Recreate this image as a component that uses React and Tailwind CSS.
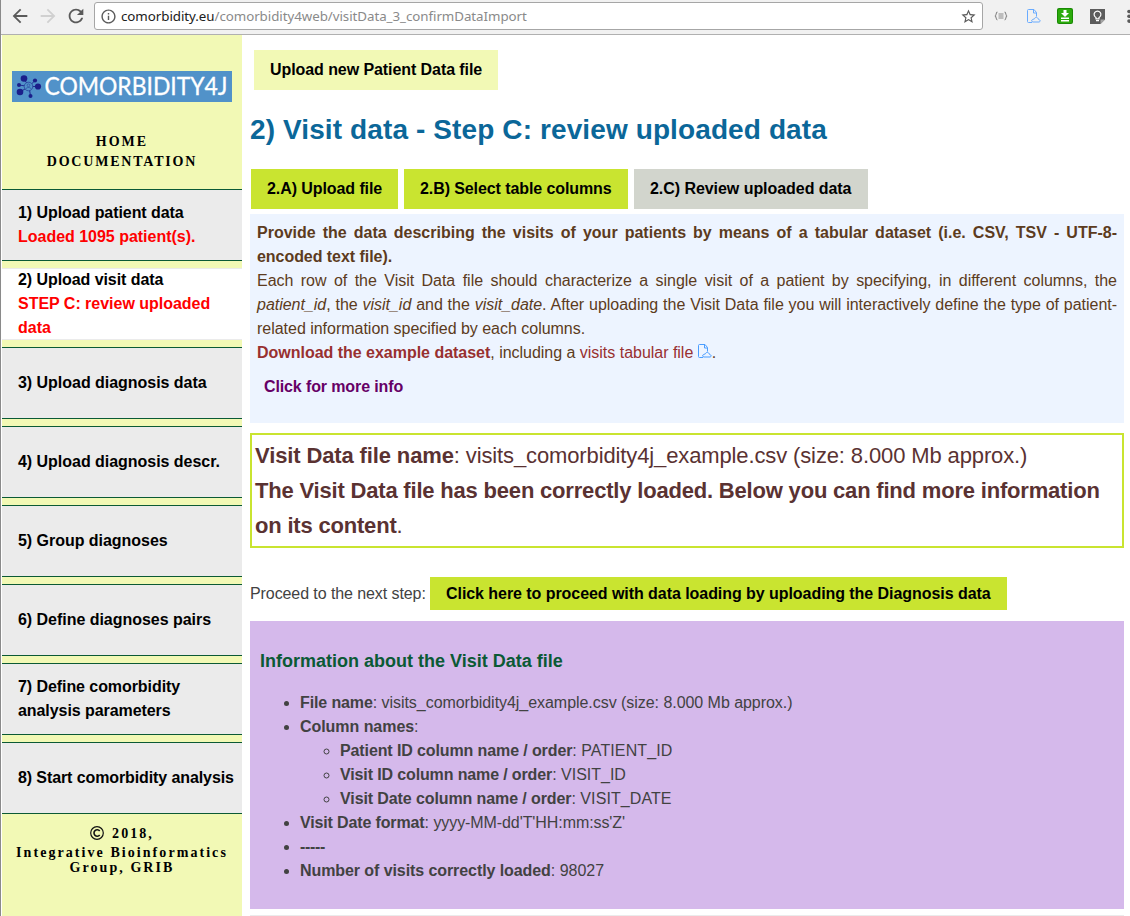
import React from "react";

const Btn = ({ className, children }) => (
  <a className={"flex items-center px-4 font-bold text-black whitespace-nowrap " + className}>{children}</a>
);

const FileCloud = ({ className, color = "#4a9dff" }) => (
  <svg viewBox="0 0 14 15" className={className} fill="none" stroke={color} strokeWidth="1">
    <path d="M5 13.500H1.500a1 1 0 0 1-1-1V1.500a1 1 0 0 1 1-1h5.500l2.500 3v4" />
    <path d="M6.500 .5V4h3" />
    <path d="M6 13a1.300 1.300 0 0 1-.5-2.500l2-.7c.5-2 3-2 3.500 0l1.500 1a1.200 1.200 0 0 1-.3 2.200z" />
  </svg>
);

const Toolbar = () => (
  <header className="flex h-[35px] items-start border-b border-[#b0b0b0] bg-[#f1f1f1]">
    <svg viewBox="0 0 24 24" className="ml-[8px] mt-[5px] h-[22px] w-[22px] shrink-0 fill-[#5a5a5a]">
      <path d="M20 11H7.830l5.590-5.590L12 4l-8 8 8 8 1.410-1.410L7.830 13H20v-2z" />
    </svg>
    <svg viewBox="0 0 24 24" className="ml-[6px] mt-[5px] h-[22px] w-[22px] shrink-0 fill-[#d0d0d0]">
      <path d="M4 13h12.170l-5.590 5.590L12 20l8-8-8-8-1.410 1.410L16.170 11H4v2z" />
    </svg>
    <svg viewBox="0 0 24 24" className="ml-[6px] mt-[5px] h-[22px] w-[22px] shrink-0 fill-[#5a5a5a]">
      <path d="M17.650 6.350C16.200 4.900 14.210 4 12 4c-4.420 0-7.990 3.580-7.990 8s3.570 8 7.990 8c3.730 0 6.840-2.550 7.730-6h-2.080c-.82 2.330-3.040 4-5.650 4-3.310 0-6-2.690-6-6s2.690-6 6-6c1.660 0 3.140.69 4.220 1.780L13 11h7V4l-2.350 2.350z" />
    </svg>
    <div className="ml-[7px] mt-[2px] flex h-7 w-[889px] shrink-0 items-center rounded-[3px] border border-[#a6a6a6] bg-white pl-[5px] pr-[5px]">
      <svg viewBox="0 0 24 24" className="h-[17px] w-[17px] shrink-0 fill-[#5a5a5a]">
        <path d="M11 17h2v-6h-2v6zm1-15C6.480 2 2 6.480 2 12s4.480 10 10 10 10-4.480 10-10S17.520 2 12 2zm0 18c-4.410 0-8-3.590-8-8s3.590-8 8-8 8 3.590 8 8-3.590 8-8 8zM11 9h2V7h-2v2z" />
      </svg>
      <span className="ml-[4px] whitespace-nowrap font-['Noto_Sans',sans-serif] text-[13.330px] leading-5 tracking-[-0.050px] text-[#8a8a8a]">
        <span className="text-[#202020]">comorbidity.eu</span>/comorbidity4web/visitData_3_confirmDataImport
      </span>
      <svg viewBox="0 0 24 24" className="ml-auto h-[17px] w-[17px] shrink-0 fill-[#5a5a5a]">
        <path d="M22 9.240l-7.190-.62L12 2 9.190 8.630 2 9.240l5.460 4.730L5.820 21 12 17.270 18.180 21l-1.630-7.030L22 9.240zM12 15.400l-3.760 2.270 1-4.280-3.320-2.880 4.380-.38L12 6.100l1.710 4.040 4.380.38-3.320 2.880 1 4.280L12 15.400z" />
      </svg>
    </div>
    <svg viewBox="0 0 14 10" className="ml-[11px] mt-[11px] h-[10px] w-[14px] shrink-0" fill="none" stroke="#8a8a8a" strokeWidth="1.200">
      <path d="M3.500 1C1.500 1 2.800 5 .8 5c2 0 .7 4 2.700 4M10.500 1c2 0 .7 4 2.700 4-2 0-.7 4-2.700 4M4.500 3h5M4.500 5h5M4.500 7h5" />
    </svg>
    <FileCloud className="ml-[19px] mt-[9px] h-[15px] w-[14px] shrink-0" color="#69abff" />
    <svg viewBox="0 0 16 16" className="ml-[16px] mt-[8px] h-4 w-4 shrink-0">
      <rect width="16" height="16" rx="2" fill="#198a04" />
      <rect x="1" y="1" width="14" height="14" rx="1.500" fill="#2cab0c" />
      <path d="M6.500 2h3v3H12L8 9 4 5h2.500zM4 9.500h8V11H4zM4 12h8v1.500H4z" fill="#fff" />
    </svg>
    <svg viewBox="0 0 15 15" className="ml-[17px] mt-[9px] h-[15px] w-[15px] shrink-0">
      <path d="M0 0h15v10.500L10.500 15H0z" fill="#5c5c5c" />
      <path d="M10.500 15v-4.500H15z" fill="#a5a5a5" />
      <path d="M6 9.800V8.500a3.400 3.400 0 1 1 3 0v1.300zM6 11.700h3" fill="none" stroke="#fff" strokeWidth="1.200" />
    </svg>
    <svg viewBox="0 0 4 14" className="ml-[22px] mt-[9px] h-[14px] w-1 shrink-0 fill-[#5a5a5a]">
      <circle cx="2" cy="2.500" r="1.800" /><circle cx="2" cy="7.300" r="1.800" /><circle cx="2" cy="12.100" r="1.800" />
    </svg>
  </header>
);

const Logo = () => (
  <svg viewBox="0 0 220 31" className="h-[31px] w-[220px] overflow-visible">
    <rect width="220" height="31" fill="#5192c9" />
    <g stroke="#1b1f8a" strokeWidth=".9">
      <path d="M12 8l5 7.500M23 9.500l-6 6M7 14l10 1.500M8 21l9-5.500M26 15.500h-9M18.500 25L17 15.500" />
    </g>
    <g fill="#1b1f8a">
      <circle cx="12" cy="7.500" r="3.300" /><circle cx="23" cy="9.500" r="2.100" /><circle cx="7" cy="14" r="2" />
      <circle cx="8" cy="21" r="3.300" /><circle cx="26" cy="15.500" r="3.100" /><circle cx="18.500" cy="25" r="2" />
    </g>
    <circle cx="16.500" cy="15.500" r="4.300" fill="#5192c9" stroke="#27409c" strokeWidth=".8" />
    <circle cx="16.500" cy="14.300" r="1.400" fill="none" stroke="#27409c" strokeWidth=".6" />
    <path d="M13.800 18c.5-2 4.900-2 5.400 0" fill="none" stroke="#27409c" strokeWidth=".6" />
    <text x="32.500" y="24" fill="#fff" stroke="#fff" strokeWidth=".3" fontFamily="Lato, sans-serif" fontSize="24.500" textLength="183" lengthAdjust="spacingAndGlyphs">COMORBIDITY4J</text>
  </svg>
);

const steps = [
  { t: "1) Upload patient data", s: "Loaded 1095 patient(s)." },
  { t: "2) Upload visit data", s: "STEP C: review uploaded data", active: true },
  { t: "3) Upload diagnosis data" },
  { t: "4) Upload diagnosis descr." },
  { t: "5) Group diagnoses" },
  { t: "6) Define diagnoses pairs" },
  { t: "7) Define comorbidity analysis parameters" },
  { t: "8) Start comorbidity analysis" },
];

const Sidebar = () => (
  <aside className="flex w-60 shrink-0 flex-col bg-[#f2f9b5]">
    <div className="flex justify-center pt-[36px]"><Logo /></div>
    <nav className="mt-[30px] flex h-[57px] flex-col text-center font-['Liberation_Serif',serif] text-[14px] font-bold leading-5 tracking-[2px] text-black">
      <a>HOME</a>
      <a className="tracking-[1.800px]">DOCUMENTATION</a>
    </nav>
    <div className="flex flex-col gap-[7px]">
      {steps.map((p, i) => (
        <div
          key={p.t}
          className={
            "flex h-[72px] flex-col justify-center border-y pl-4 pr-1 font-bold leading-6 text-black " +
            (p.active ? "border-[#ebebeb] bg-white " : "border-[#0b5a35] bg-[#ebebeb] ") +
            (i === 7 ? "tracking-[-0.100px]" : i < 2 || i === 6 ? "tracking-[-0.070px]" : "tracking-[-0.030px]")
          }
        >
          <span>{p.t}</span>
          {p.s && <span className="tracking-[-0.020px] text-[#ff0000]">{p.s}</span>}
        </div>
      ))}
    </div>
    <footer className="pt-[8px] text-center font-['Liberation_Serif',serif] text-[14px] font-bold leading-[15px] tracking-[2.060px] text-black">
      <div className="flex h-[23px] items-center justify-center pb-px">
        <svg viewBox="0 0 14 14" className="mr-[8px] h-[14px] w-[14px]" fill="none" stroke="#111">
          <circle cx="7" cy="7" r="6.300" strokeWidth="1.200" />
          <path d="M9.700 5A3.200 3.200 0 1 0 9.700 9" strokeWidth="1.600" />
        </svg>
        <span>2018,</span>
      </div>
      <div>Integrative Bioinformatics<br />Group, GRIB</div>
    </footer>
  </aside>
);

const Main = () => (
  <main className="flex w-[882px] flex-col items-start pl-2 pt-[15px] text-[#424242]">
    <Btn className="ml-1 h-10 w-[244px] bg-[#f2f9b5] tracking-[-0.075px]">Upload new Patient Data file</Btn>
    <h1 className="mt-[20px] h-10 whitespace-nowrap text-[28px] font-bold leading-10 tracking-[0.110px] text-[#0b6799]">
      2) Visit data - Step C: review uploaded data
    </h1>
    <div className="ml-px mt-[19px] flex gap-[6px]">
      <Btn className="h-10 w-[147px] bg-[#c9e430] tracking-[-0.080px]">2.A) Upload file</Btn>
      <Btn className="h-10 w-[224px] bg-[#c9e430] tracking-[-0.090px]">2.B) Select table columns</Btn>
      <Btn className="h-10 w-[234px] bg-[#d2d5cd] tracking-[-0.050px]">2.C) Review uploaded data</Btn>
    </div>
    <section className="mt-[5px] h-[209px] w-full bg-[#edf4ff] px-[7px] pt-[7px] text-justify leading-6 text-[#5c3b20]">
      <p className="font-bold">
        Provide the data describing the visits of your patients by means of a tabular dataset (i.e. CSV, TSV - UTF-8-<span className="tracking-[-0.050px]">encoded text file).</span>
      </p>
      <p className="tracking-[-0.020px]">
        Each row of the Visit Data file should characterize a single visit of a patient by specifying, in different columns, the <i>patient_id</i>, the <i>visit_id</i> and the <i>visit_date</i>. After uploading the Visit Data file you will interactively define the type of patient-related information specified by each columns.
      </p>
      <p className="h-6 tracking-[-0.020px]">
        <b className="text-[#983030]">Download the example dataset</b>, including a <a className="text-[#983030]">visits tabular file</a>{" "}
        <FileCloud className="inline-block h-[15px] w-[14px] align-[-1px]" />.
      </p>
      <p className="ml-[7px] mt-[10px] font-bold tracking-[-0.120px] text-[#660066]">Click for more info</p>
    </section>
    <section className="mt-[10px] h-[115px] w-full border-2 border-[#c9e430] p-[3px] text-[22px] leading-[35px] text-[#5a3232]">
      <p className="tracking-[-0.125px]"><b>Visit Data file name</b>: visits_comorbidity4j_example.csv (size: 8.000 Mb approx.)</p>
      <p className="tracking-[-0.190px]"><b>The Visit Data file has been correctly loaded. Below you can find more information <br />on its content</b>.</p>
    </section>
    <div className="mt-[29px] flex items-center whitespace-pre">
      <span className="w-[180px] tracking-[-0.085px]">Proceed to the next step: </span>
      <Btn className="h-[33px] w-[577px] bg-[#c9e430] tracking-[-0.055px]">Click here to proceed with data loading by uploading the Diagnosis data</Btn>
    </div>
    <section className="mt-[11px] h-[288px] w-full bg-[#d5b9eb] px-[10px] pt-7 leading-6">
      <h3 className="text-[18px] font-bold leading-6 text-[#0b5a35]">Information about the Visit Data file</h3>
      <ul className="mt-[18px] list-disc pl-10">
        <li className="tracking-[-0.045px]"><b className="tracking-[-0.120px]">File name</b>: visits_comorbidity4j_example.csv (size: 8.000 Mb approx.)</li>
        <li>
          <b className="tracking-[-0.050px]">Column names</b>:
          <ul className="list-[circle] pl-10">
            <li><b className="tracking-[-0.110px]">Patient ID column name / order</b>: <span className="tracking-[0.120px]">PATIENT_ID</span></li>
            <li><b className="tracking-[-0.130px]">Visit ID column name / order</b>: VISIT_ID</li>
            <li><b className="tracking-[-0.100px]">Visit Date column name / order</b>: <span className="tracking-[0.090px]">VISIT_DATE</span></li>
          </ul>
        </li>
        <li><b className="tracking-[-0.140px]">Visit Date format</b>: <span className="tracking-[-0.080px]">yyyy-MM-dd'T'HH:mm:ss'Z'</span></li>
        <li><b className="tracking-[-0.330px]">-----</b></li>
        <li><b className="tracking-[-0.080px]">Number of visits correctly loaded</b>: 98027</li>
      </ul>
    </section>
    <div className="mt-[6px] h-px w-full bg-[#ebebeb]" />
  </main>
);

export default function App() {
  return (
    <div className="flex h-[916px] w-[1130px] overflow-hidden border-l border-[#8a8a8a] bg-white font-['Liberation_Sans',Arial,sans-serif] text-base">
      <div className="flex w-[1129px] shrink-0 flex-col">
        <Toolbar />
        <div className="flex flex-1 pl-px">
          <Sidebar />
          <Main />
        </div>
      </div>
    </div>
  );
}
